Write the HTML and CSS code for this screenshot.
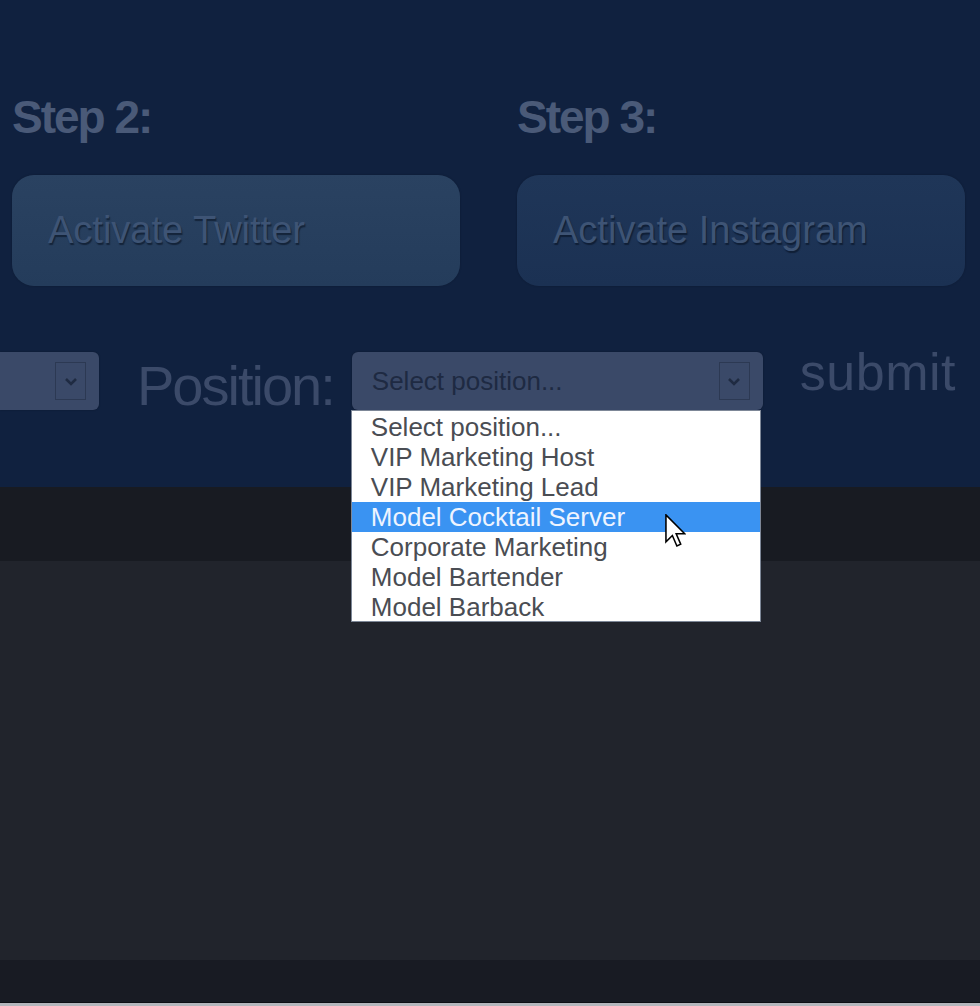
FILE: index.html
```html
<!DOCTYPE html>
<html>
<head>
<meta charset="utf-8">
<link rel="stylesheet" href="styles.css">
</head>
<body>
<div class="hero">
  <div class="steps">
    <div class="step">
      <h2 class="step-title">Step 2:</h2>
      <div class="step-btn btn-twitter">Activate Twitter</div>
    </div>
    <div class="step">
      <h2 class="step-title">Step 3:</h2>
      <div class="step-btn btn-insta">Activate Instagram</div>
    </div>
  </div>
  <div class="form-row">
    <div class="select select-partial">
      <span class="arrow"><svg width="14" height="9" viewBox="0 0 14 9"><polyline points="2,2 7,7 12,2" fill="none" stroke="#1f2b42" stroke-width="2.6"/></svg></span>
    </div>
    <div class="label">Position:</div>
    <div class="select select-position">
      <span class="placeholder">Select position...</span>
      <span class="arrow"><svg width="14" height="9" viewBox="0 0 14 9"><polyline points="2,2 7,7 12,2" fill="none" stroke="#1f2b42" stroke-width="2.6"/></svg></span>
      <ul class="dropdown">
        <li>Select position...</li>
        <li>VIP Marketing Host</li>
        <li>VIP Marketing Lead</li>
        <li class="active">Model Cocktail Server</li>
        <li>Corporate Marketing</li>
        <li>Model Bartender</li>
        <li>Model Barback</li>
      </ul>
      <svg class="cursor" width="21" height="33" viewBox="0 0 12 19"><path d="M0.5,0.5 L0.5,16 L4.2,12.4 L6.8,18.4 L9,17.4 L6.4,11.4 L11.3,11.4 Z" fill="#fff" stroke="#000" stroke-width="0.9" stroke-linejoin="miter"/></svg>
    </div>
    <div class="submit">submit</div>
  </div>
</div>
<div class="band"></div>
<div class="main"></div>
<div class="footer"></div>
<div class="footer-edge"></div>
</body>
</html>
```
FILE: styles.css
```css
html, body {
  margin: 0;
  padding: 0;
  background: #1f222a;
  font-family: "Liberation Sans", Arial, sans-serif;
}

.hero {
  height: 487px;
  box-sizing: border-box;
  background: #10213f;
  padding-top: 94px;
}

.steps {
  display: grid;
  grid-template-columns: 448px 448px;
  column-gap: 57px;
  padding-left: 12px;
}

.step-title {
  margin: 0;
  font-size: 46px;
  line-height: 46px;
  font-weight: bold;
  letter-spacing: -2px;
  color: #4a5a78;
}

.step-btn {
  margin-top: 35px;
  height: 111px;
  box-sizing: border-box;
  border-radius: 22px;
  padding-left: 36px;
  display: flex;
  align-items: center;
  font-size: 38px;
  color: #3e5475;
  text-shadow: 1px 2px 1px rgba(5, 14, 30, 0.55);
  box-shadow: 0 0 2px rgba(0, 0, 0, 0.25);
}

.btn-twitter {
  background: linear-gradient(#2a4261, #243c5b);
}

.btn-insta {
  background: linear-gradient(#1f3658, #1b3153);
}

.form-row {
  margin-top: 60px;
  display: flex;
  align-items: flex-start;
}

.select {
  position: relative;
  margin-top: 6px;
  height: 58px;
  background: #3a4968;
  border-radius: 6px;
  box-shadow: 0 0 2px rgba(0, 0, 0, 0.3);
}

.select-partial {
  width: 99px;
  border-radius: 0 6px 6px 0;
}

.arrow {
  position: absolute;
  right: 13px;
  top: 10px;
  width: 31px;
  height: 38px;
  box-sizing: border-box;
  border: 1px solid #2c3953;
  display: flex;
  align-items: center;
  justify-content: center;
}

.label {
  margin-left: 38px;
  margin-top: 11px;
  font-size: 56px;
  line-height: 58px;
  letter-spacing: -2px;
  color: #3b4a69;
}

.select-position {
  margin-left: 18px;
  width: 411px;
}

.placeholder {
  display: block;
  padding-left: 20px;
  font-size: 26px;
  line-height: 58px;
  color: #1e2a42;
}

.dropdown {
  position: absolute;
  left: -1px;
  top: 58px;
  width: 410px;
  margin: 0;
  padding: 1px 0 0;
  list-style: none;
  background: #ffffff;
  border: 1px solid #7d8797;
  box-sizing: border-box;
  height: 212px;
  z-index: 5;
}

.dropdown li {
  height: 30px;
  line-height: 30px;
  font-size: 26px;
  padding-left: 19px;
  color: #4a4d53;
}

.dropdown li.active {
  background: #3a93f2;
  color: #eef4ff;
}

.cursor {
  position: absolute;
  left: 313px;
  top: 162px;
  z-index: 6;
}

.submit {
  margin-left: 37px;
  font-size: 52px;
  line-height: 52px;
  letter-spacing: 0.5px;
  color: #3b4a69;
}

.band {
  height: 74px;
  background: #181b22;
}

.main {
  height: 399px;
  background: #21242c;
}

.footer {
  height: 42px;
  background: #181b23;
  border-bottom: 1px solid #0d0f14;
}

.footer-edge {
  height: 3px;
  background: #b3b6bc;
}
```
